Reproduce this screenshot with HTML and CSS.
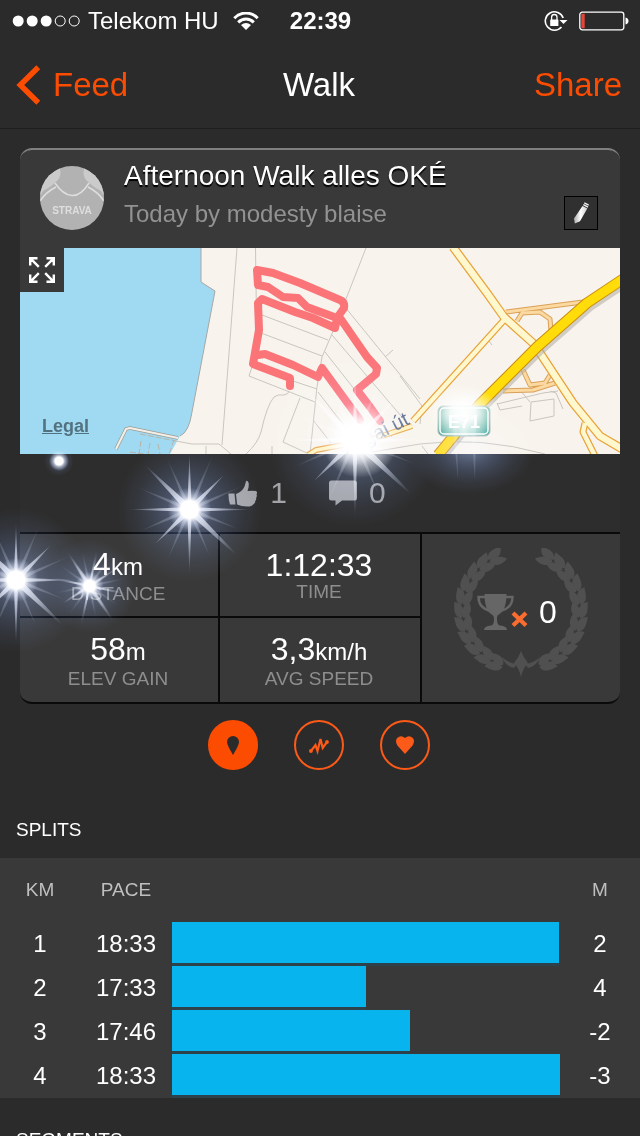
FILE: index.html
```html
<!DOCTYPE html>
<html lang="en">
<head>
<meta charset="utf-8">
<meta name="viewport" content="width=device-width, initial-scale=1">
<title>Walk</title>
<link rel="stylesheet" href="styles.css">
</head>
<body>
<div class="app">
  <div class="status">
    <div class="status-left">
      <svg class="signal" width="68" height="12" viewBox="0 0 68 12" aria-hidden="true">
        <g fill="#fff"><circle cx="6.200" cy="6" r="5.500"/><circle cx="20.200" cy="6" r="5.500"/><circle cx="34.200" cy="6" r="5.500"/></g>
        <g fill="none" stroke="#fff"><circle cx="48.200" cy="6" r="5"/><circle cx="62.200" cy="6" r="5"/></g>
      </svg>
      <span>Telekom HU</span>
      <svg class="wifi" width="26" height="18" viewBox="0 0 26 18" aria-hidden="true">
        <g fill="none" stroke="#fff" stroke-width="3">
          <path d="M1.3 6.2C8-.6 18-.6 24.7 6.2"/>
          <path d="M5.2 10.3c4.600-4.400 11-4.400 15.600 0"/>
        </g>
        <path d="M8 13q5-4 10 0l-5 5z" fill="#fff"/>
      </svg>
    </div>
    <time class="clock">22:39</time>
    <div class="status-right">
      <svg width="24" height="22" viewBox="0 0 24 22" aria-hidden="true">
        <path d="M19.200 8A9.200 9.200 0 1 0 17.500 17" fill="none" stroke="#fff" stroke-width="1.600"/>
        <path d="M15.500 10h8l-4 4z" fill="#fff"/>
        <rect x="6.200" y="9.500" width="8.200" height="6.500" rx=".6" fill="#fff"/>
        <path d="M7.600 10V7.200a2.700 2.700 0 0 1 5.400 0V10" fill="none" stroke="#fff" stroke-width="1.300"/>
      </svg>
      <svg width="50" height="20" viewBox="0 0 50 20" aria-hidden="true">
        <rect x=".8" y="1.200" width="44" height="17.600" rx="2.500" fill="none" stroke="#fff" stroke-width="1.300"/>
        <rect x="2.300" y="2.800" width="3.400" height="14.400" fill="#e8453a"/>
        <path d="M46.500 6.500q3 .7 3 3.500t-3 3.500z" fill="#fff"/>
      </svg>
    </div>
  </div>

  <header class="nav">
    <button class="nav-btn back" type="button">
      <svg width="25" height="40" viewBox="0 0 25 40" aria-hidden="true"><path d="M22.300 2.300L4.300 20l18 17.700" fill="none" stroke="#fc4c02" stroke-width="5.500"/></svg>
      <span>Feed</span>
    </button>
    <h1>Walk</h1>
    <button class="nav-btn share" type="button">Share</button>
  </header>

  <main>
    <article class="card">
      <div class="card-head">
        <svg class="avatar" width="64" height="64" viewBox="0 0 64 64" role="img" aria-label="Athlete">
          <clipPath id="face"><circle cx="32" cy="32" r="32"/></clipPath>
          <g clip-path="url(#face)">
            <rect width="64" height="64" fill="#b2b2b2"/>
            <path d="M0 0h19q4 9-2 15T3 25L0 30zM64 0H45q-4 9 2 15t14 10l3 5z" fill="#cbcbcb"/>
            <path d="M15 17Q23 29 32 29.500T49 17M0 35q6-9 16-14M64 35q-6-9-16-14" fill="none" stroke="#dedede" stroke-width="1.500"/>
          </g>
          <text class="avatar-text" x="32" y="48" text-anchor="middle">STRAVA</text>
        </svg>
        <div class="titles">
          <h2>Afternoon Walk alles OKÉ</h2>
          <p>Today by modesty blaise</p>
        </div>
        <button class="edit" type="button" aria-label="Edit">
          <svg width="16" height="22" viewBox="0 0 16 22" aria-hidden="true">
            <defs><linearGradient id="pen" x1="0" x2="1"><stop offset="0" stop-color="#aaa"/><stop offset=".5" stop-color="#fff"/><stop offset="1" stop-color="#ccc"/></linearGradient></defs>
            <path d="M9.500 4l4.800 2.600L7 19.200 1.800 21.500 1 16.500z" fill="url(#pen)"/>
            <path d="M10.300 2.700l4.700 2.500M11.300.8l4.400 2.300" stroke="#eee" stroke-width="1.400"/>
          </svg>
        </button>
      </div>

      <div class="map">
        <svg class="map-art" viewBox="20 248 600 206" role="img" aria-label="Route map">
          <defs>
            <linearGradient id="sign" x1="0" x2="1"><stop offset="0" stop-color="#4ba692"/><stop offset=".5" stop-color="#c4e6dc"/><stop offset="1" stop-color="#4ba692"/></linearGradient>
          </defs>
          <rect x="20" y="248" width="600" height="206" fill="#f8f4ed"/>
          <path d="M20 248H201V282L215 291 192 412Q189 432 180 436L170 454H20z" fill="#a0d9f2"/>
          <path d="M201 248V282L215 291 192 412Q189 432 180 436" fill="none" stroke="#a8a8a4"/>
          <g fill="none" stroke-linejoin="round">
            <path d="M116 449l10-20 4-1 48 10" stroke="#9d9c94" stroke-width="3.500"/>
            <path d="M116 449l10-20 4-1 48 10" stroke="#f4f0e8" stroke-width="2"/>
            <path d="M174 440l-5 14M130 452l14 2M141 441l-2 13M150 443l-2 11M158 444l2 10M140 434l36 7" stroke="#b9b4a6" stroke-dasharray="6 2"/>
          </g>
          <g fill="none" stroke="#c9c6bf">
            <path d="M237 248L222 445M255.500 248l1 70M366 248l-22 56-13 32-9 21-5 30-7 67M262 315l66 25M261 333l61 23M253 364l-4 12 66 26M290 380l27 9M176 441l16 3h27l12 10M206 454v-8M246 454q12-11 15-22 6-27 13-35 4-3 10-2 5-1 5-4M300 398l-17 44 26 12M332 335l75 88M325 352l67 85M318 392l45 58M313 420l18 23M345 307l75 92M385 357l8-7M272 454v-8"/>
            <path d="M400 376l22 30-2 18M488 340l4 5M497 404l46-11 15-2M500 410l22-4M500 410l-3-7M531 402l23-3v17l-24 5zM520 390l10 12M550 391l6 2 7 16M360 454l60-10q60-8 125 10M422 446l6 8"/>
          </g>
          <g fill="none" stroke-linejoin="round">
            <path d="M308 455l8-5 54-10 42-14" stroke="#e7a437" stroke-width="6"/>
            <path d="M308 455l8-5 54-10 42-14" stroke="#fff3bd" stroke-width="3.500"/>
            <g stroke="#d9a058" stroke-width="5">
              <path d="M506 312l77-10 23-10 14-9M517 321l5-8 18-1 10 7 1 12M523 370l7 15 15-2 5-8M503 391l30-1 22-7"/>
            </g>
            <g stroke="#fbd9a0" stroke-width="3">
              <path d="M506 312l77-10 23-10 14-9M517 321l5-8 18-1 10 7 1 12M523 370l7 15 15-2 5-8M503 391l30-1 22-7"/>
            </g>
            <g stroke="#e8a23a">
              <path d="M453 247L487 293 504 317 534 344 573 403 600 436 622 449" stroke-width="9"/>
              <path d="M505 319L413 421M585 423l-2 9 12 24" stroke-width="7"/>
            </g>
            <g stroke="#fff8cf">
              <path d="M453 247L487 293 504 317 534 344 573 403 600 436 622 449" stroke-width="6.500"/>
              <path d="M505 319L413 421M585 423l-2 9 12 24" stroke-width="4.500"/>
            </g>
            <path d="M438 455L480 404 537 347 587 303 626 277" stroke="#a9a59d" stroke-width="11" transform="translate(2 3)" opacity=".5"/>
            <path d="M438 455L480 404 537 347 587 303 626 277" stroke="#c98c10" stroke-width="11"/>
            <path d="M438 455L480 404 537 347 587 303 626 277" stroke="#ffdc0a" stroke-width="9"/>
            <path d="M257 270l1 15 10 2 15 10 15 1 9 9 30 11 7-10q1-6-4-8l-40-17-27-10zM337 318l-2 10-22-10-18-6-33-13-4 4 1 27-6 34 37 14v8M258 355l7-1 28 11 25 12 4-9 38 52M340 318l27 39 10 11-1 6-19 16 13 17 10 14" stroke="#fb7477" stroke-width="8" stroke-linecap="round"/>
          </g>
          <text class="road-name" transform="translate(347 456) rotate(-27)">Aligai út</text>
          <rect x="438" y="406" width="52" height="30" rx="5" fill="url(#sign)" stroke="#a9b9b4"/>
          <rect x="440" y="408" width="48" height="26" rx="4" fill="none" stroke="#fff" stroke-width="1.500"/>
          <text class="sign-text" x="464" y="428" text-anchor="middle">E71</text>
        </svg>
        <button class="expand" type="button" aria-label="Full screen">
          <svg width="26" height="26" viewBox="0 0 26 26" aria-hidden="true">
            <path d="M1.200 8.500V1.200h7.300M1.200 1.200l8.600 8.600M17.500 1.200h7.300v7.300M24.800 1.200l-8.600 8.600M1.200 17.500v7.300h7.300M1.200 24.800l8.600-8.600M24.800 17.500v7.300h-7.300M24.800 24.800l-8.600-8.600" fill="none" stroke="#fff" stroke-width="2.400"/>
          </svg>
        </button>
        <a class="legal" href="#legal">Legal</a>
      </div>

      <div class="social">
        <button type="button" aria-label="Kudos 1">
          <svg width="30" height="27" viewBox="0 0 30 27" aria-hidden="true"><path d="M.5 13.500H6.500l1 11H2Q.3 19 .5 13.500zM8 14q6-2 8.500-7.500L18.200.8q2.500.2 2.600 3.700 0 3-1.300 6.500 5-.7 8.600 0 1.700 1.500.4 3.400 1 1.800-.4 3.400.5 2-.9 3.300.2 2-1.500 3-1 2-4 2.400-7.600.6-12.600-2z" fill="#a3a4a8"/></svg>
          <span>1</span>
        </button>
        <button type="button" aria-label="Comments 0">
          <svg width="28" height="26" viewBox="0 0 28 26" aria-hidden="true"><path d="M2.500.5h23q2.500 0 2.500 2.500v15q0 2.500-2.500 2.500H13L6.500 25.500v-5h-4Q0 20.500 0 18V3Q0 .5 2.500.5z" fill="#a3a4a8"/></svg>
          <span>0</span>
        </button>
      </div>

      <div class="stats">
        <div class="stat"><strong>4<small>km</small></strong><span>DISTANCE</span></div>
        <div class="stat"><strong>1:12:33</strong><span>TIME</span></div>
        <div class="trophies">
          <svg class="laurel" width="134" height="134" viewBox="-67 -62 134 134" aria-hidden="true">
            <defs>
              <g id="leaves">
                <path d="M-8.500-59.500C-6-69 4-66 8-67 7-57-2-56-8.500-59.500z"/>
                <path d="M-8-57.500C-1-62 6-56 9-52.500 2-48-7-50-8-57.500z"/>
              </g>
              <g id="branch">
                <use href="#leaves" transform="rotate(-25)"/><use href="#leaves" transform="rotate(-38)"/>
                <use href="#leaves" transform="rotate(-51)"/><use href="#leaves" transform="rotate(-64)"/>
                <use href="#leaves" transform="rotate(-77)"/><use href="#leaves" transform="rotate(-90)"/>
                <use href="#leaves" transform="rotate(-103)"/><use href="#leaves" transform="rotate(-116)"/>
                <use href="#leaves" transform="rotate(-129)"/><use href="#leaves" transform="rotate(-142)"/>
                <use href="#leaves" transform="rotate(-154)"/>
                <path d="M-19 47q6 6 15 7l-3 4q-9-2-12-11z"/>
              </g>
            </defs>
            <g fill="#505050">
              <use href="#branch"/><use href="#branch" transform="scale(-1 1)"/>
              <path d="M0 41q2 6 7 12-5 5-7 14-2-9-7-14 5-6 7-12z"/>
            </g>
          </svg>
          <div class="trophy-count">
            <svg width="52" height="37" viewBox="0 0 52 37" aria-hidden="true">
              <path d="M7.500 0h22q0 17-8.500 21-1.200 1-1 4 0 6 3 6.500 7 .5 7 4.500H7q0-4 7-4.500 3-.5 3-6.500 0-3-1.500-4Q7.500 17 7.500 0z" fill="#666"/>
              <path d="M8 3H1.500q0 11 12 14M29 3h6.500q0 11-12 14" fill="none" stroke="#666" stroke-width="2.400"/>
              <path d="M36 19l13 12.500M49 19L36 31.500" stroke="#f96d30" stroke-width="4.200"/>
            </svg>
            <span>0</span>
          </div>
        </div>
        <div class="stat"><strong>58<small>m</small></strong><span>ELEV GAIN</span></div>
        <div class="stat"><strong>3,3<small>km/h</small></strong><span>AVG SPEED</span></div>
      </div>
    </article>

    <nav class="tabs" aria-label="Activity views">
      <button class="tab active" type="button" aria-label="Overview">
        <svg width="12" height="19" viewBox="0 0 12 19" aria-hidden="true"><path d="M6 0a6 6 0 0 1 6 6Q12 9 6 19 0 9 0 6a6 6 0 0 1 6-6z" fill="#2b2b2b"/></svg>
      </button>
      <button class="tab" type="button" aria-label="Analysis">
        <svg width="20" height="20" viewBox="0 0 20 20" aria-hidden="true"><path d="M2 16l4.500-6L8.500 16 11.500 4l2.200 9L18 7" fill="none" stroke="#fc5a18" stroke-width="2.200"/><circle cx="1.900" cy="16" r="1.900" fill="#fc5a18"/><circle cx="18" cy="7" r="1.900" fill="#fc5a18"/></svg>
      </button>
      <button class="tab" type="button" aria-label="Heart rate">
        <svg width="18" height="18" viewBox="0 0 18 18" aria-hidden="true"><path d="M9 18L1.400 9.500Q-1.300 5 1.200 1.900 5-1.600 9 2q4-3.600 7.800-.1 2.500 3.100-.2 7.600z" fill="#fc5a18"/></svg>
      </button>
    </nav>

    <section>
      <h3>SPLITS</h3>
      <table class="splits">
        <colgroup><col class="col-km"><col class="col-pace"><col><col class="col-m"></colgroup>
        <thead><tr><th scope="col">KM</th><th scope="col">PACE</th><td></td><th scope="col">M</th></tr></thead>
        <tbody>
          <tr><td>1</td><td>18:33</td><td class="bar-cell"><div class="bar" style="width:99.7%"></div></td><td>2</td></tr>
          <tr><td>2</td><td>17:33</td><td class="bar-cell"><div class="bar" style="width:50%"></div></td><td>4</td></tr>
          <tr><td>3</td><td>17:46</td><td class="bar-cell"><div class="bar" style="width:61.3%"></div></td><td>-2</td></tr>
          <tr><td>4</td><td>18:33</td><td class="bar-cell"><div class="bar" style="width:100%"></div></td><td>-3</td></tr>
        </tbody>
      </table>
    </section>
    <section>
      <h3>SEGMENTS</h3>
    </section>
  </main>

  <svg class="flares" viewBox="0 340 640 340" aria-hidden="true">
    <defs>
      <radialGradient id="halo"><stop offset="0" stop-color="#7f9bd8" stop-opacity=".6"/><stop offset=".4" stop-color="#4f6ba8" stop-opacity=".36"/><stop offset=".75" stop-color="#3d5488" stop-opacity=".14"/><stop offset="1" stop-color="#3d5488" stop-opacity="0"/></radialGradient>
      <radialGradient id="core"><stop offset="0" stop-color="#fff"/><stop offset=".4" stop-color="#fff"/><stop offset=".58" stop-color="#dfe6fa" stop-opacity=".6"/><stop offset="1" stop-color="#b4c4f0" stop-opacity="0"/></radialGradient>
      <radialGradient id="fade" gradientUnits="userSpaceOnUse" cx="0" cy="0" r="64"><stop offset="0" stop-color="#fff"/><stop offset=".45" stop-color="#d8e0f4" stop-opacity=".65"/><stop offset="1" stop-color="#a9bce8" stop-opacity="0"/></radialGradient>
      <radialGradient id="glare"><stop offset="0" stop-color="#fff"/><stop offset=".35" stop-color="#fff" stop-opacity=".9"/><stop offset="1" stop-color="#fff" stop-opacity="0"/></radialGradient>
      <filter id="soft" x="-20%" y="-20%" width="140%" height="140%"><feGaussianBlur stdDeviation=".6"/></filter>
      <g id="star">
        <circle r="72" fill="url(#halo)"/>
        <g fill="url(#fade)" filter="url(#soft)">
          <path d="M-62 0L0-2.200 62 0 0 2.200zM0-56L2.200 0 0 68-2.200 0z"/>
          <path d="M-46-46L2-3 56 54-2 3zM34-34L2.500 2-34 34-2-2z"/>
          <path d="M-52-22L1-2 50 20-1 2zM-50 22L-1-2 54-24 1 2zM-22-50L2-1 20 46-2 1zM24-56L2 1-22 50-2-1z" opacity=".35"/>
        </g>
        <circle r="22" fill="url(#core)"/>
      </g>
    </defs>
    <use href="#star" transform="translate(189.500 509.500)"/>
    <use href="#star" transform="translate(16 580)"/>
    <use href="#star" transform="translate(89.500 586) rotate(12) scale(.65)"/>
    <ellipse cx="470" cy="450" rx="64" ry="44" fill="url(#halo)"/>
    <use href="#star" transform="translate(355 440) scale(1.200)"/>
    <circle cx="360" cy="440" r="38" fill="url(#glare)"/>
    <ellipse cx="463" cy="412" rx="36" ry="26" fill="url(#glare)"/>
    <path d="M455 400l2 30 1 50-5-50zM474 400l2 30-1 50-4-50z" fill="#fff" opacity=".14"/>
    <circle cx="59" cy="461" r="15" fill="url(#halo)"/>
    <circle cx="59" cy="461" r="10" fill="url(#core)"/>
  </svg>
</div>
</body>
</html>
```
FILE: styles.css
```css
* { box-sizing: border-box; }

body {
  margin: 0;
  background: #2b2b2b;
  color: #fff;
  font-family: "Liberation Sans", Arial, sans-serif;
}

h1, h2, h3, p { margin: 0; font-weight: 400; }

button {
  margin: 0;
  padding: 0;
  border: 0;
  background: none;
  color: inherit;
  font: inherit;
}

svg { display: block; flex: none; }

.app {
  position: relative;
  height: 100vh;
  overflow-x: hidden;
  overflow-y: auto;
  scrollbar-width: none;
}

/* Status bar */
.status {
  display: grid;
  grid-template-columns: 1fr auto 1fr;
  align-items: center;
  height: 40px;
  padding: 2px 11px 0 12px;
  font-size: 24px;
  line-height: 28px;
}

.status-left, .status-right { display: flex; align-items: center; }
.status-left { gap: 8px; }
.wifi { margin-left: 6px; }
.clock { font-weight: 700; }
.status-right { justify-content: flex-end; gap: 11px; }

/* Navigation bar */
.nav {
  display: grid;
  grid-template-columns: 1fr auto 1fr;
  align-items: center;
  height: 89px;
  padding: 2px 18px 0 16px;
  border-bottom: 1px solid #1e1e1e;
  font-size: 33px;
  line-height: 40px;
}

.nav h1 { font-size: 33px; }
.nav-btn { color: #fc4c02; }
.back { display: flex; align-items: center; justify-self: start; gap: 12px; }
.share { justify-self: end; }

/* Activity card */
.card {
  margin: 19px 20px 16px;
  overflow: hidden;
  border-top: 2px solid #7f7f7f;
  border-bottom: 2px solid #0a0a0a;
  border-radius: 12px;
  background: #393939;
}

.card-head {
  display: flex;
  align-items: center;
  height: 98px;
  padding: 0 22px 2px 20px;
}

.titles { flex: 1; min-width: 0; margin-left: 20px; padding-bottom: 6px; }

.titles h2 {
  font-size: 28px;
  line-height: 38px;
  text-shadow: 0 2px 1px #000;
}

.titles p { color: #929292; font-size: 24px; line-height: 38px; }

.avatar-text { fill: #dedede; font-size: 10px; font-weight: 700; }

.edit {
  display: flex;
  align-items: center;
  justify-content: center;
  align-self: flex-end;
  width: 34px;
  height: 34px;
  margin-bottom: 16px;
  border: 1px solid #000;
  background: #303030;
}

.map { position: relative; }
.map-art { width: 100%; height: auto; }
.road-name { fill: #5f6d88; font-size: 20px; }
.sign-text { fill: #fff; font-size: 18px; font-weight: 700; }

.expand {
  position: absolute;
  top: 0;
  left: 0;
  display: flex;
  align-items: center;
  justify-content: center;
  width: 44px;
  height: 44px;
  background: #393939;
}

.legal {
  position: absolute;
  bottom: 18px;
  left: 22px;
  color: #53727f;
  font-size: 18px;
  font-weight: 700;
  line-height: 20px;
}

.social {
  display: flex;
  align-items: center;
  justify-content: center;
  gap: 42px;
  height: 78px;
  padding-right: 26px;
  background: #2d2d2d;
  color: #a3a4a8;
  font-size: 30px;
  line-height: 34px;
}

.social button { display: flex; align-items: center; gap: 12px; }

.stats {
  display: grid;
  grid-template-columns: 198fr 200fr 198fr;
  grid-template-rows: 82px 84px;
  gap: 2px;
  padding-top: 2px;
  background: #0a0a0a;
}

.stat {
  display: flex;
  flex-direction: column;
  align-items: center;
  justify-content: center;
  padding: 2px 2px 0 0;
  background: #393939;
}

.stat strong { font-size: 32px; font-weight: 400; line-height: 32px; }
.stat small { font-size: 24px; }
.stat span { color: #8e8e8e; font-size: 19px; line-height: 22px; }

.trophies {
  display: grid;
  grid-row: 1 / 3;
  grid-column: 3;
  place-items: center;
  padding-bottom: 6px;
  background: #393939;
}

.laurel, .trophy-count { grid-area: 1 / 1; }

.trophy-count {
  display: flex;
  align-items: center;
  gap: 10px;
  padding: 0 8px 6px 0;
  font-size: 32px;
  line-height: 36px;
}

/* View switcher */
.tabs { display: flex; justify-content: center; gap: 36px; padding-right: 2px; }

.tab {
  display: flex;
  align-items: center;
  justify-content: center;
  width: 50px;
  height: 50px;
  border: 2px solid #fc5a18;
  border-radius: 50%;
}

.tab.active { border-color: #fc4c02; background: #fc4c02; }

/* Sections */
h3 { padding: 48px 16px 16px; font-size: 19px; line-height: 24px; }
section + section h3 { padding-top: 30px; }

.splits {
  width: 100%;
  border-collapse: collapse;
  table-layout: fixed;
  background: #393939;
  font-size: 24px;
  line-height: 28px;
  text-align: center;
}

.col-km, .col-m { width: 80px; }
.col-pace { width: 92px; }
.splits th { height: 64px; padding: 0; color: #bfbfbf; font-size: 19px; font-weight: 400; }
.splits td { height: 44px; padding: 0 0 1px; }
.splits .bar-cell { padding: 0 0 3px; }
.bar { height: 41px; background: #08b4ee; box-shadow: 0 3px 0 #2e424b; }

/* Light flares over the page */
.flares {
  position: absolute;
  top: 340px;
  left: 0;
  width: 100%;
  pointer-events: none;
  mix-blend-mode: screen;
}
```
